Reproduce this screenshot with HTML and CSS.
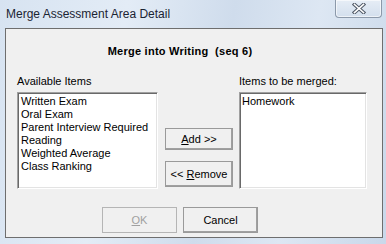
FILE: index.html
```html
<!DOCTYPE html>
<html>
<head>
<meta charset="utf-8">
<link rel="stylesheet" href="styles.css">
</head>
<body>
<div class="window">
  <div class="titlebar">
    <span class="title">Merge Assessment Area Detail</span>
    <div class="close">
      <svg width="14" height="11" viewBox="0 0 14 11">
        <path d="M2.5 1.5 L11.5 9.5 M11.5 1.5 L2.5 9.5" stroke="#4f5866" stroke-width="3.6" stroke-linecap="square" fill="none"/>
        <path d="M2.5 1.5 L11.5 9.5 M11.5 1.5 L2.5 9.5" stroke="#ffffff" stroke-width="1.6" stroke-linecap="square" fill="none"/>
      </svg>
    </div>
  </div>
  <div class="panel">
    <div class="heading">Merge into Writing&nbsp; (seq 6)</div>
    <div class="main">
      <div class="col col-left">
        <div class="label">Available Items</div>
        <div class="list list-left">
          <div>Written Exam</div>
          <div>Oral Exam</div>
          <div>Parent Interview Required</div>
          <div>Reading</div>
          <div>Weighted Average</div>
          <div>Class Ranking</div>
        </div>
      </div>
      <div class="buttons">
        <button class="btn btn-add"><u>A</u>dd &gt;&gt;</button>
        <button class="btn btn-remove">&lt;&lt; <u>R</u>emove</button>
      </div>
      <div class="col col-right">
        <div class="label">Items to be merged:</div>
        <div class="list list-right">
          <div>Homework</div>
        </div>
      </div>
    </div>
    <div class="footer">
      <button class="btn btn-foot btn-ok" disabled><u>O</u>K</button>
      <button class="btn btn-foot">Cancel</button>
    </div>
  </div>
</div>
</body>
</html>
```
FILE: styles.css
```css
html, body {
  margin: 0;
  padding: 0;
}
body {
  width: 386px;
  height: 244px;
  overflow: hidden;
  font-family: "Liberation Sans", Arial, sans-serif;
}
.window {
  width: 386px;
  height: 244px;
  background: linear-gradient(100deg, #d7e3f1 0%, #e3ecf6 30%, #cfdcec 55%, #dde7f3 75%, #c9d8ea 100%);
  box-sizing: border-box;
}
.titlebar {
  height: 28px;
  display: flex;
  justify-content: space-between;
  align-items: flex-start;
}
.title {
  font-size: 12px;
  line-height: 15px;
  color: #1b2433;
  padding-top: 7px;
  padding-left: 6px;
}
.close {
  width: 45px;
  height: 17px;
  margin-right: 4px;
  border: 1px solid #8c99aa;
  border-top: none;
  border-radius: 0 0 4px 4px;
  background: linear-gradient(#e6edf6, #d3dfed);
  display: flex;
  align-items: center;
  justify-content: center;
  box-shadow: inset 0 0 0 1px rgba(255,255,255,0.6);
}
.close svg {
  display: block;
}
.panel {
  margin-left: 5px;
  width: 378px;
  box-sizing: border-box;
  border: 1px solid #6e6e6e;
  background: #f0f0f0;
  padding: 16px 0 4px 0;
  font-size: 11px;
  line-height: 13px;
  color: #000;
}
.heading {
  font-weight: bold;
  text-align: center;
  padding-right: 28px;
  height: 13px;
  letter-spacing: 0.25px;
}
.main {
  display: flex;
  margin-top: 17px;
  padding-left: 11px;
}
.col {
  display: flex;
  flex-direction: column;
}
.label {
  height: 13px;
  margin-bottom: 4px;
}
.col-left {
  width: 141px;
}
.col-right {
  width: 128px;
  margin-left: 6px;
}
.list {
  height: 97px;
  box-sizing: border-box;
  background: #fff;
  border: 1px solid;
  border-color: #a0a0a0 #ffffff #ffffff #a0a0a0;
  box-shadow: inset 1px 1px 0 #696969, inset -1px -1px 0 #e3e3e3;
  padding: 2px 3px;
  white-space: nowrap;
  overflow: hidden;
}
.list-right {
  padding-left: 2px;
}
.buttons {
  width: 68px;
  margin-left: 7px;
  padding-top: 53px;
  display: flex;
  flex-direction: column;
}
.btn {
  font-family: "Liberation Sans", Arial, sans-serif;
  font-size: 11px;
  line-height: 13px;
  color: #000;
  background: #f0f0f0;
  border: 1px solid;
  border-color: #ffffff #696969 #696969 #ffffff;
  box-shadow: inset -1px -1px 0 #a0a0a0;
  outline: 1px solid #9a9a9a;
  outline-offset: -1px;
  padding: 0;
  margin: 0;
  box-sizing: border-box;
}
.btn-add {
  height: 22px;
}
.btn-remove {
  height: 26px;
  margin-top: 11px;
}
.footer {
  display: flex;
  justify-content: center;
  gap: 6px;
  padding-right: 28px;
  margin-top: 18px;
}
.btn-foot {
  width: 75px;
  height: 26px;
}
.btn-ok {
  color: #a0a0a0;
  border-color: #ffffff #a0a0a0 #a0a0a0 #ffffff;
  box-shadow: none;
  outline-color: #b5b5b5;
}
```
